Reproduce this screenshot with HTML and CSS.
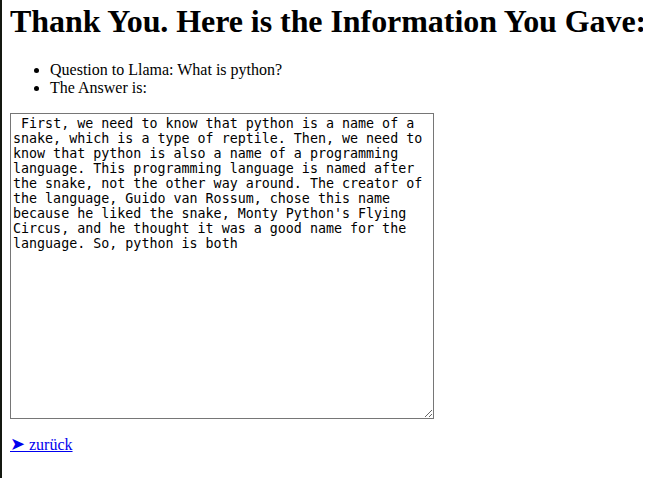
FILE: index.html
```html
<!DOCTYPE html>
<html>
<head>
<meta charset="utf-8">
<link rel="stylesheet" href="styles.css">
</head>
<body>
<h1 class="title">Thank You. Here is the Information You Gave:</h1>
<ul class="info">
<li>Question to Llama: What is python?</li>
<li>The Answer is:</li>
</ul>
<textarea class="answer"> First, we need to know that python is a name of a snake, which is a type of reptile. Then, we need to know that python is also a name of a programming language. This programming language is named after the snake, not the other way around. The creator of the language, Guido van Rossum, chose this name because he liked the snake, Monty Python's Flying Circus, and he thought it was a good name for the language. So, python is both</textarea>
<p class="back"><a href="#" class="back-link"><span class="arrow">&#10148;</span> zurück</a></p>
</body>
</html>
```
FILE: styles.css
```css
html {
  border-left: 2px solid #141810;
  background: #fff;
  min-height: 100%;
}
body {
  margin: 0 8px 8px 8px;
  font-family: "Liberation Serif", "DejaVu Serif", serif;
  font-size: 16px;
  color: #000;
}
.title {
  font-size: 32px;
  font-weight: bold;
  margin: 3px 0 21px 0;
  white-space: nowrap;
  letter-spacing: -0.06px;
}
.info {
  margin: 16px 0;
  padding-left: 40px;
}
.answer {
  display: block;
  box-sizing: border-box;
  width: 424px;
  height: 306px;
  margin: 0;
  padding: 2px;
  border: 1px solid #767676;
  font-family: "DejaVu Sans Mono", monospace;
  font-size: 13.333px;
  line-height: 15px;
  color: #000;
  background: #fff;
}
.back {
  margin: 16px 0;
}
.back-link {
  color: #0000ee;
}
.arrow {
  font-size: 18px;
  line-height: 1;
}
```
